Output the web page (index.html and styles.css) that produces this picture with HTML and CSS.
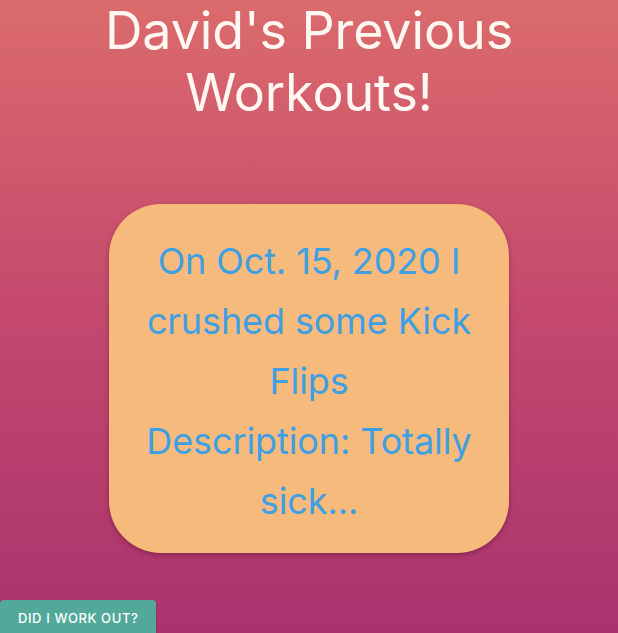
FILE: index.html
```html
<!DOCTYPE html>
<html>
<head>
<meta charset="utf-8">
<link rel="stylesheet" href="styles.css">
</head>
<body>
<div class="page">
  <h1 class="title">David's Previous Workouts!</h1>
  <div class="card">
    <p class="line">On Oct. 15, 2020 I crushed some Kick Flips</p>
    <p class="line">Description: Totally sick...</p>
  </div>
  <div class="actions">
    <button class="btn">DID I WORK OUT?</button>
  </div>
</div>
</body>
</html>
```
FILE: styles.css
```css
html, body {
  margin: 0;
  padding: 0;
  height: 100%;
  overflow: hidden;
}
body {
  background: linear-gradient(180deg, #db6b6c 0%, #c4486e 50%, #a8336e 100%);
  font-family: Inter, "Noto Sans", sans-serif;
}
.page {
  display: flex;
  flex-direction: column;
  align-items: center;
}
.title {
  margin: 0;
  width: 440px;
  text-align: center;
  font-size: 52px;
  line-height: 62px;
  font-weight: 400;
  color: #fff7f1;
  letter-spacing: -0.1px;
}
.card {
  margin-top: 80px;
  width: 400px;
  box-sizing: border-box;
  padding: 27px 30px 22px;
  background: #f5ba7c;
  border-radius: 52px;
  box-shadow: 0 2px 5px rgba(60, 0, 30, 0.35);
  text-align: center;
}
.line {
  margin: 0;
  font-size: 36px;
  line-height: 60px;
  font-weight: 400;
  color: #3d9fe4;
  letter-spacing: -0.1px;
}
.actions {
  align-self: stretch;
  margin-top: 47px;
}
.btn {
  border: none;
  background: #52a99a;
  color: #ffffff;
  font-family: Inter, "Noto Sans", sans-serif;
  font-size: 13px;
  font-weight: 500;
  letter-spacing: 0.6px;
  padding: 8px 18px;
  border-radius: 4px;
  height: 36px;
  box-shadow: 0 2px 2px rgba(0,0,0,0.2);
}
```
